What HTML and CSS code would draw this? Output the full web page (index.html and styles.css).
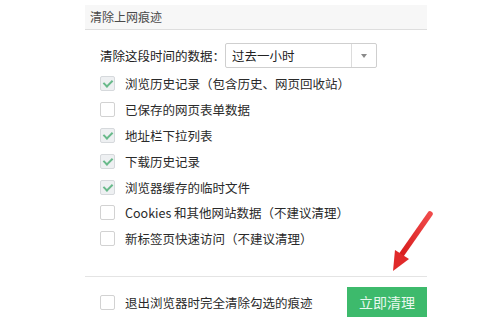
FILE: index.html
```html
<!DOCTYPE html>
<html lang="zh-CN">
<head>
<meta charset="utf-8">
<link rel="stylesheet" href="styles.css">
</head>
<body>
<div class="panel">
  <div class="header">清除上网痕迹</div>
  <div class="content">
    <div class="range-row">
      <span class="range-label">清除这段时间的数据：</span>
      <div class="select">
        <span class="select-value">过去一小时</span>
        <span class="select-btn"><span class="tri"></span></span>
      </div>
    </div>
    <ul class="options">
      <li class="opt"><span class="box checked"></span><span>浏览历史记录（包含历史、网页回收站）</span></li>
      <li class="opt"><span class="box"></span><span>已保存的网页表单数据</span></li>
      <li class="opt"><span class="box checked"></span><span>地址栏下拉列表</span></li>
      <li class="opt"><span class="box checked"></span><span>下载历史记录</span></li>
      <li class="opt"><span class="box checked"></span><span>浏览器缓存的临时文件</span></li>
      <li class="opt"><span class="box"></span><span>Cookies 和其他网站数据（不建议清理）</span></li>
      <li class="opt"><span class="box"></span><span>新标签页快速访问（不建议清理）</span></li>
    </ul>
  </div>
  <div class="footer">
    <div class="opt foot-opt"><span class="box"></span><span>退出浏览器时完全清除勾选的痕迹</span></div>
    <button class="btn">立即清理</button>
  </div>
  <svg class="arrow" width="50" height="70" viewBox="0 0 50 70">
    <defs>
      <linearGradient id="g" x1="1" y1="0" x2="0" y2="1">
        <stop offset="0" stop-color="#f04a4a"/>
        <stop offset="1" stop-color="#d81e1e"/>
      </linearGradient>
    </defs>
    <path d="M45 6 L17 46" stroke="url(#g)" stroke-width="5.5" stroke-linecap="round" fill="none"/>
    <path d="M8 63 L10 42 L24 51 Z" fill="#e02a2a"/>
  </svg>
</div>
</body>
</html>
```

FILE: styles.css
```css
html, body {
  margin: 0;
  padding: 0;
  background: #fff;
}
body {
  font-family: "Noto Sans CJK SC", "Microsoft YaHei", sans-serif;
  font-size: 12px;
  color: #333;
  width: 502px;
  height: 323px;
  overflow: hidden;
}
.panel {
  position: relative;
  margin: 5px 0 0 85px;
  width: 342px;
  height: 318px;
  overflow: visible;
}
.header {
  height: 25px;
  line-height: 23px;
  background: #f7f7f7;
  border-bottom: 1px solid #dedede;
  padding-left: 5px;
  color: #4a4a4a;
  font-size: 12px;
  box-sizing: border-box;
}
.content {
  padding: 13px 0 0 15px;
  height: 247px;
  box-sizing: border-box;
  border-bottom: 1px solid #e4e4e4;
}
.range-row {
  display: flex;
  align-items: center;
  height: 25px;
}
.range-label {
  font-size: 12.5px;
  color: #222;
  width: 125px;
}
.select {
  display: flex;
  width: 152px;
  height: 25px;
  border: 1px solid #cfcfcf;
  border-radius: 2px;
  box-sizing: border-box;
  background: #fff;
}
.select-value {
  flex: 1;
  padding-left: 6px;
  line-height: 23px;
  font-size: 12.5px;
  color: #222;
}
.select-btn {
  width: 24px;
  border-left: 1px solid #dcdcdc;
  display: flex;
  align-items: center;
  justify-content: center;
}
.tri {
  width: 0;
  height: 0;
  border-left: 3px solid transparent;
  border-right: 3px solid transparent;
  border-top: 4px solid #8a8a8a;
}
.options {
  list-style: none;
  margin: 3px 0 0 0;
  padding: 0;
}
.opt {
  display: flex;
  align-items: center;
  height: 25.8px;
  font-size: 12.5px;
  color: #2a2a2a;
}
.box {
  width: 15px;
  height: 15px;
  border: 1px solid #d2d2d2;
  border-radius: 2px;
  box-sizing: border-box;
  margin-right: 10px;
  background: #fff;
  position: relative;
  flex-shrink: 0;
}
.box.checked {
  background: #eef0f2;
  border-color: #d6d9dc;
}
.box.checked::after {
  content: "";
  position: absolute;
  left: 4px;
  top: 1px;
  width: 4px;
  height: 7px;
  border-right: 2px solid #68b98a;
  border-bottom: 2px solid #68b98a;
  transform: rotate(45deg);
}
.footer {
  display: flex;
  align-items: center;
  justify-content: space-between;
  padding: 10px 0 0 15px;
}
.foot-opt {
  height: 30px;
}
.btn {
  width: 80px;
  height: 30px;
  border: none;
  background: #3dba6c;
  color: #e8f8ee;
  font-family: "Noto Sans CJK SC", sans-serif;
  font-size: 14px;
  padding: 0;
}
.arrow {
  position: absolute;
  left: 300px;
  top: 203px;
}
```
